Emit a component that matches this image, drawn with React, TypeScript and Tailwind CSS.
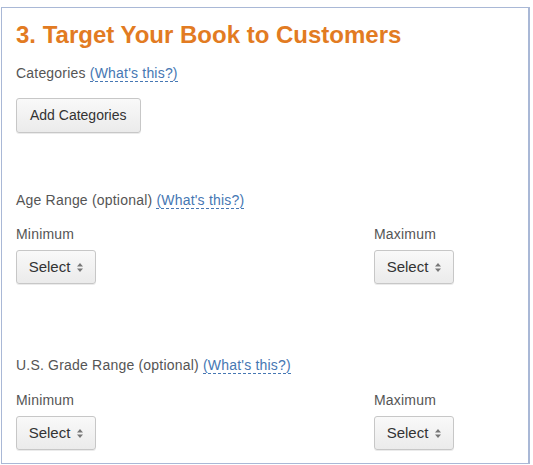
import { ReactNode } from 'react';

function HelpLink() {
  return (
    <a href="#" className="text-[#4677b3] border-b border-dashed border-[#4677b3] leading-[15px]">
      (What's this?)
    </a>
  );
}

function Label({ children }: { children: ReactNode }) {
  return <div className="text-[14px] tracking-[0.2px] text-[#555]">{children}</div>;
}

function SelectButton() {
  return (
    <button className="flex h-[34px] w-[80px] items-center justify-center gap-[7px] rounded-[3px] border border-[#c7c7c7] bg-gradient-to-b from-[#f9f9f9] to-[#ebebeb] text-[15px] text-[#333] shadow-[0_1px_0_rgba(0,0,0,0.08)]">
      Select
      <svg width="6" height="9" viewBox="0 0 6 9" className="fill-[#777]">
        <path d="M3 0 L6 3.5 H0 Z M3 9 L0 5.5 H6 Z" />
      </svg>
    </button>
  );
}

function RangeRow() {
  return (
    <div className="grid grid-cols-[358px_1fr]">
      {['Minimum', 'Maximum'].map((side) => (
        <div key={side} className="flex flex-col gap-[5px]">
          <Label>{side}</Label>
          <SelectButton />
        </div>
      ))}
    </div>
  );
}

export default function App() {
  return (
    <div className="h-[465px] w-[533px] bg-white pt-[7px] pl-[1px] font-['Liberation_Sans',Arial,sans-serif]">
      <div className="h-[457px] w-[529px] border-t border-l border-r-2 border-b border-[#a9b8d6] px-[14px] pt-[12px]">
        <h2 className="text-[24px] font-bold leading-[30px] text-[#e27b22]">
          3. Target Your Book to Customers
        </h2>

        <div className="mt-[13px]">
          <Label>
            Categories <HelpLink />
          </Label>
        </div>
        <button className="mt-[14px] h-[35px] rounded-[3px] border border-[#c7c7c7] bg-gradient-to-b from-[#f9f9f9] to-[#ebebeb] px-[13px] text-[14px] text-[#333] shadow-[0_1px_0_rgba(0,0,0,0.08)]">
          Add Categories
        </button>

        <div className="mt-[57px]">
          <Label>
            Age Range (optional) <HelpLink />
          </Label>
        </div>
        <div className="mt-[13px]">
          <RangeRow />
        </div>

        <div className="mt-[71px]">
          <Label>
            U.S. Grade Range (optional) <HelpLink />
          </Label>
        </div>
        <div className="mt-[14px]">
          <RangeRow />
        </div>
      </div>
    </div>
  );
}
